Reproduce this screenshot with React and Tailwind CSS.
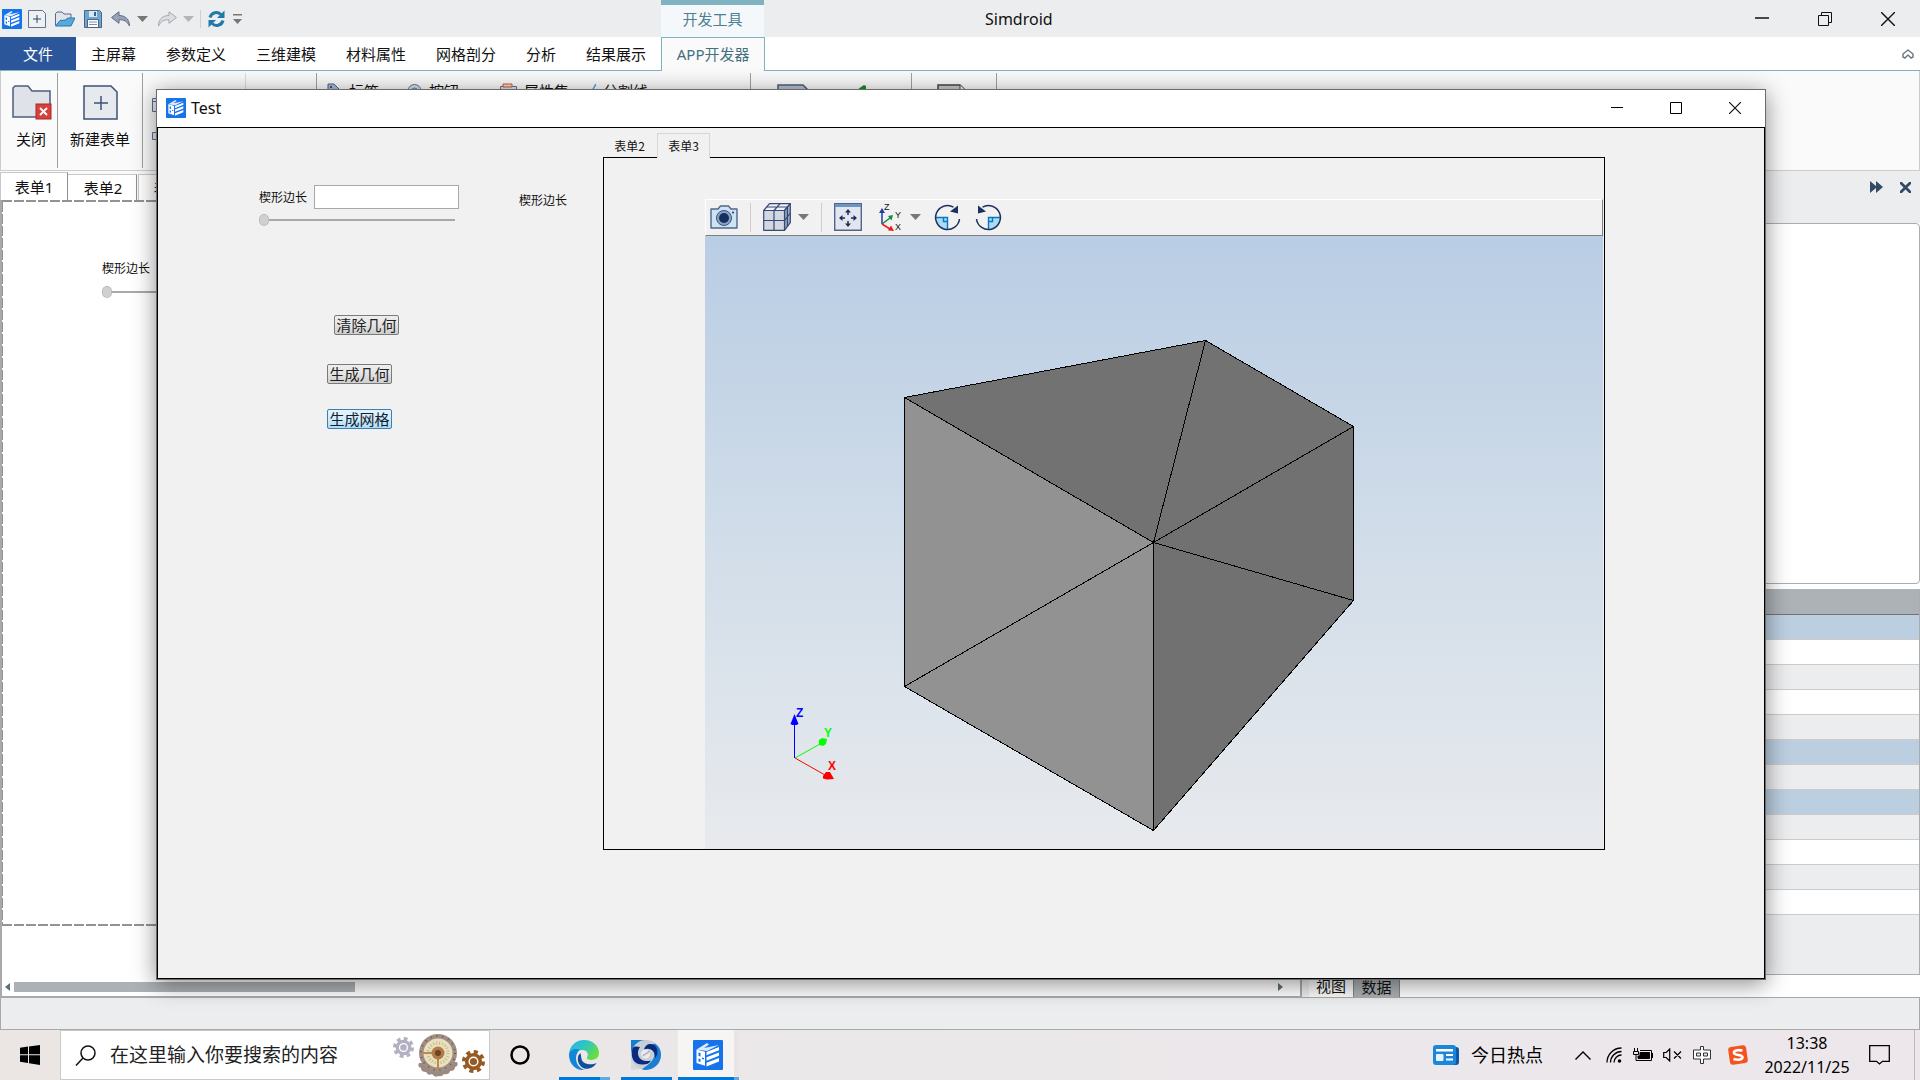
import React, { useState } from 'react';

const MENU_ITEMS = ['主屏幕', '参数定义', '三维建模', '材料属性', '网格剖分', '分析', '结果展示'];

const PROPERTY_ROWS = [
  'group', 'plain', 'alt', 'plain', 'alt', 'group',
  'alt', 'group', 'alt', 'plain', 'alt', 'plain',
];

const ROW_COLORS = {
  group: 'bg-[#bccfe0]',
  plain: 'bg-white',
  alt: 'bg-[#ecedef]',
};

function Caret({ className = 'text-[#777777]' }) {
  return (
    <svg width="11" height="6" viewBox="0 0 11 6" className={className}>
      <path d="M0 0h11L5.500 6z" fill="currentColor" />
    </svg>
  );
}

function AppLogo({ size = 20 }) {
  return (
    <svg width={size} height={size} viewBox="0 0 30 30">
      <rect width="30" height="30" rx="1" fill="#1673ec" />
      <path d="M3.500 9.500L14 3l2 1.500-5 3.500 15-3-12 6z" fill="#fff" opacity=".85" />
      <path d="M3.500 9.500l8.500 2.200v14L3.500 23z" fill="#fff" />
      <path d="M5.500 12.500l2 .5v3.500l-2-.5zM5.500 18.500l2 .5v3l-2-.5zM9 17.500l2 .5v1.500l-2-.5z" fill="#1673ec" />
      <path d="M13.500 12L26 7v3.200l-12.500 5zM13.500 17.200L26 12.500v3.200l-12.500 5zM13.500 22.700L26 18v3.500l-12.500 5z" fill="#fff" />
    </svg>
  );
}

function CloseIcon({ size = 12, width = 1.2 }) {
  return (
    <svg width={size} height={size} viewBox="0 0 12 12" fill="none" stroke="currentColor" strokeWidth={width}>
      <path d="M0 0l12 12M12 0L0 12" />
    </svg>
  );
}

function QuickAccess() {
  return (
    <div className="flex items-center h-full pl-[2px] w-[661px] shrink-0">
      <AppLogo />
      <button aria-label="New" className="ml-[6px]">
        <svg width="18" height="18" viewBox="0 0 18 18" fill="#eef0f4" stroke="#66738f">
          <path d="M.5.5h14l3 3v14H.5z" />
          <path d="M5 9h8M9 5v8" stroke="#2f4468" />
        </svg>
      </button>
      <button aria-label="Open" className="ml-[9px]">
        <svg width="20" height="16" viewBox="0 0 20 16">
          <path d="M.5 14.500V2.500L2 1h5l2 2h7v4" fill="#dfe3ea" stroke="#5c6a88" />
          <path d="M.5 15L5 9.500l6-.5 1.500-2H20l-4 8z" fill="#57a8dc" stroke="#2a79ac" />
        </svg>
      </button>
      <button aria-label="Save" className="ml-[9px]">
        <svg width="18" height="18" viewBox="0 0 18 18">
          <path d="M.5.5h15l2 2v15H.5z" fill="#6ea6d2" stroke="#4d6285" />
          <path d="M5 1h8v6H5z" fill="#dbe8f3" />
          <path d="M10 2h2v4h-2z" fill="#33628f" />
          <path d="M3.500 9.500h11v8h-11z" fill="#fff" stroke="#4d6285" />
          <path d="M5 12h8M5 14.500h8" stroke="#8290a4" />
        </svg>
      </button>
      <button aria-label="Undo" className="ml-[9px]">
        <svg width="20" height="16" viewBox="0 0 20 16">
          <path d="M.5 6.500L8 .8v3.700c6 0 10.500 3.500 10.500 10.500C16 10 13 8.700 8 8.700v3.600z" fill="#98a3b7" stroke="#5b6b86" />
        </svg>
      </button>
      <span className="ml-[6px]"><Caret /></span>
      <button aria-label="Redo" className="ml-[9px]">
        <svg width="20" height="16" viewBox="0 0 20 16">
          <path d="M19.500 6.500L12 .8v3.700C6 4.500 1.500 8 1.500 15 4 10 7 8.700 12 8.700v3.600z" fill="#dcdee1" stroke="#a3a7ad" />
        </svg>
      </button>
      <span className="ml-[6px]"><Caret className="text-[#b5b5b5]" /></span>
      <span className="ml-[6px] w-px h-[18px] bg-[#cfd0d2]" />
      <button aria-label="Refresh" className="ml-[7px]">
        <svg width="17" height="18" viewBox="0 0 17 18" fill="none" stroke="#1f7aa8" strokeWidth="3">
          <path d="M2 7.500C3.500 2 9.500 1.300 13 4.500" />
          <path d="M15 10.500C13.500 16 7.500 16.700 4 13.500" />
          <path d="M16.500.5V8H9z" fill="#1f7aa8" stroke="none" />
          <path d="M.5 17.500V10H8z" fill="#1f7aa8" stroke="none" />
        </svg>
      </button>
      <button aria-label="Customize" className="ml-[8px]">
        <svg width="9" height="10" viewBox="0 0 9 10" fill="#777">
          <path d="M0 0h9v1.500H0zM0 5h9L4.500 10z" />
        </svg>
      </button>
    </div>
  );
}

function TitleBar() {
  return (
    <header className="flex h-[37px] shrink-0 bg-[#ecedef]">
      <QuickAccess />
      <div className="w-[103px] shrink-0 border-t-[5px] border-[#80b3c2] bg-[#f4f8fb] pt-[4px] text-center text-[15px] leading-[20px] text-[#4c8091]">
        开发工具
      </div>
      <h1 className="flex-1 pl-[221px] self-center text-[16px] leading-[20px]">Simdroid</h1>
      <div className="flex items-center gap-[49px] pr-[25px] text-[#111]">
        <button aria-label="Minimize">
          <svg width="14" height="14" viewBox="0 0 14 14"><path d="M0 6h14" stroke="currentColor" strokeWidth="1.500" /></svg>
        </button>
        <button aria-label="Restore">
          <svg width="14" height="14" viewBox="0 0 14 14" fill="none" stroke="currentColor">
            <path d="M.5 3.500h10v10H.5zM3.500 3.500v-3h10v10h-3" />
          </svg>
        </button>
        <button aria-label="Close"><CloseIcon size={14} /></button>
      </div>
    </header>
  );
}

function MenuBar() {
  return (
    <nav className="flex h-[34px] shrink-0 bg-white border-b border-[#80b3c2] text-[15px]">
      <button className="w-[76px] pt-px bg-[#2b579a] text-white">文件</button>
      {MENU_ITEMS.map((item) => (
        <button key={item} className="px-[15px] pt-px whitespace-nowrap">{item}</button>
      ))}
      <button className="w-[104px] -mb-px border border-b-0 border-[#80b3c2] bg-[#fafafa] text-[#44707f] whitespace-nowrap">
        APP开发器
      </button>
      <div className="flex-1 flex items-center justify-end pr-[6px] text-[#6b7780]">
        <button aria-label="Collapse ribbon">
          <svg width="12" height="10" viewBox="0 0 12 10" fill="none" stroke="currentColor" strokeWidth="1.400" strokeLinejoin="round">
            <path d="M1 8V5L6 1l5 4v3L9 9 6 6 3 9z" />
          </svg>
        </button>
      </div>
    </nav>
  );
}

function RibbonItem({ label, children }) {
  return (
    <div className="flex items-center gap-[7px] text-[15px] leading-[20px] whitespace-nowrap">
      {children}
      {label}
    </div>
  );
}

function Ribbon() {
  return (
    <div className="flex h-[100px] shrink-0 bg-[#fafafa] border border-t-0 border-[#cdcdcd] py-[2px] text-[15px]">
      <button className="w-[57px] shrink-0 border-r border-[#a0a0a0] flex flex-col items-center pt-[12px] pl-[5px]">
        <svg width="40" height="35" viewBox="0 0 40 35">
          <path d="M1 32V3l2-2h13l4 5h18v26z" fill="#dfe2e9" stroke="#4c5d7d" strokeWidth="1.500" />
          <rect x="24" y="19" width="15" height="15" fill="#d9403c" stroke="#a52a28" />
          <path d="M28 23l7 7M35 23l-7 7" stroke="#fff" strokeWidth="1.800" />
        </svg>
        <span className="mt-[9px] mr-px leading-[20px]">关闭</span>
      </button>
      <button className="w-[85px] shrink-0 border-r border-[#a0a0a0] flex flex-col items-center pt-[12px]">
        <svg width="35" height="35" viewBox="0 0 35 35" fill="#e6e9ee" stroke="#3e5277" strokeWidth="1.500">
          <path d="M1 1h27l6 6v27H1z" />
          <path d="M11 18h14M18 11v14" />
        </svg>
        <span className="mt-[9px] leading-[20px] whitespace-nowrap">新建表单</span>
      </button>
      <div className="w-[103px] shrink-0 border-r border-[#dadada] pt-[25px] pl-[9px] flex flex-col gap-[19px]">
        <svg width="14" height="14" fill="#e6e9ee" stroke="#5c6f90"><path d="M.5.5h13v13H.5zM0 3.500h14" /></svg>
        <svg width="14" height="10" fill="#e6e9ee" stroke="#5c6f90"><path d="M.5 1.500h13v7H.5z" /></svg>
      </div>
      <div className="w-[71px] shrink-0 border-r border-[#a0a0a0]" />
      <div className="w-[434px] shrink-0 border-r border-[#a0a0a0] pl-[10px] pt-[8px] flex items-start">
        <div className="w-[80px]">
          <RibbonItem label="标签">
            <svg width="15" height="16" viewBox="0 0 15 16"><path d="M1 1h6l8 8-6 6-8-8z" fill="#a9bad2" stroke="#4b6286" /><circle cx="4" cy="4" r="1" fill="#1c2f52" /></svg>
          </RibbonItem>
        </div>
        <div className="w-[93px]">
          <RibbonItem label="按钮">
            <svg width="15" height="16" viewBox="0 0 15 16" fill="#d5dfec" stroke="#5c7396"><circle cx="7.500" cy="8" r="6.500" /><circle cx="7.500" cy="8" r="3" /></svg>
          </RibbonItem>
        </div>
        <div className="w-[88px]">
          <RibbonItem label="属性集">
            <svg width="17" height="16" viewBox="0 0 17 16"><path d="M.5 3.500h16v12H.5z" fill="#dfe4ec" stroke="#63738f" /><path d="M3 1h9v3H3z" fill="#f4d7ca" stroke="#c05a3a" /></svg>
          </RibbonItem>
        </div>
        <RibbonItem label="分割线">
          <svg width="8" height="16" viewBox="0 0 8 16" stroke="#4a9fe0" strokeWidth="1.500"><path d="M8 1L0 15" /></svg>
        </RibbonItem>
      </div>
      <div className="w-[161px] shrink-0 border-r border-[#a0a0a0] pl-[26px] pt-[11px] flex items-start gap-[42px]">
        <svg width="34" height="34" viewBox="0 0 34 34"><path d="M1 1h25l7 7v25H1z" fill="#b9c1cf" stroke="#4c5d7d" strokeWidth="1.500" /></svg>
        <svg width="20" height="34" viewBox="0 0 20 34"><path d="M0 9L8 3l3-2 2 1v3L8 20z" fill="#17901f" /></svg>
      </div>
      <div className="w-[85px] shrink-0 border-r border-[#a0a0a0] pl-[25px] pt-[11px]">
        <svg width="32" height="34" viewBox="0 0 32 34"><path d="M1 1h22l8 8v24H1z" fill="#c8c9cc" stroke="#444" strokeWidth="1.500" /><path d="M23 1v8h8" fill="#fff" stroke="#444" /></svg>
      </div>
    </div>
  );
}

function EdgeSlider({ id, label, className }) {
  const [value, setValue] = useState(0);
  return (
    <input
      id={id}
      type="range"
      aria-label={label}
      value={value}
      onChange={(e) => setValue(e.target.value)}
      className={`block w-[196px] h-[12px] appearance-none bg-transparent [&::-webkit-slider-runnable-track]:h-[2px] [&::-webkit-slider-runnable-track]:bg-[#a8a8a8] [&::-webkit-slider-thumb]:appearance-none [&::-webkit-slider-thumb]:w-[10px] [&::-webkit-slider-thumb]:h-[12px] [&::-webkit-slider-thumb]:-mt-[5px] [&::-webkit-slider-thumb]:rounded-full [&::-webkit-slider-thumb]:bg-[#d0d0d0] [&::-webkit-slider-thumb]:border [&::-webkit-slider-thumb]:border-dotted [&::-webkit-slider-thumb]:border-[#a8a8a8] ${className}`}
    />
  );
}

function DashedRule() {
  return <div className="h-[2px] shrink-0 bg-[repeating-linear-gradient(90deg,#939393_0px,#939393_10px,transparent_10px,transparent_12px)]" />;
}

/** Form designer: document tabs, canvas and its scroll bar. */
function Designer() {
  return (
    <section className="flex-1 min-w-0 flex flex-col bg-white">
      <div className="flex items-end h-[29px] shrink-0 bg-[#fafafa] text-[15px] leading-[20px]">
        <button className="w-[68px] h-[28px] bg-white border border-b-0 border-[#c8c8c8] border-r-[#8e8e8e]">表单1</button>
        <button className="w-[69px] h-[26px] pl-[2px] bg-white border border-l-0 border-b-0 border-[#c8c8c8] border-r-[#8e8e8e]">表单2</button>
        <button className="w-[70px] h-[26px] ml-px bg-white border border-b-0 border-[#c8c8c8] border-r-[#8e8e8e]">表单3</button>
      </div>
      <div className="flex-1 flex flex-col border-x-2 border-b-2 border-[#a9a9a9]">
        <div className="h-[726px] flex flex-col">
          <DashedRule />
          <div className="flex-1 flex">
            <div className="w-px bg-[repeating-linear-gradient(180deg,#939393_0px,#939393_10px,transparent_10px,transparent_12px)]" />
            <div className="pt-[58px] pl-[99px]">
              <label htmlFor="designer-edge" className="block text-[12px] leading-[18px]">楔形边长</label>
              <EdgeSlider id="designer-edge" className="mt-[8px]" />
            </div>
          </div>
          <DashedRule />
        </div>
        <div className="mt-auto mb-[4px] flex items-center h-[10px] pl-[3px] pr-[17px] text-[#5b7078]">
          <svg width="5" height="8" viewBox="0 0 5 8" fill="currentColor"><path d="M5 0v8L0 4z" /></svg>
          <div className="ml-[4px] w-[341px] h-[10px] bg-[#acb1b5]" />
          <svg width="5" height="8" viewBox="0 0 5 8" fill="currentColor" className="ml-auto"><path d="M0 0v8l5-4z" /></svg>
        </div>
      </div>
    </section>
  );
}

function PropertyDock() {
  return (
    <aside className="w-[618px] shrink-0 flex flex-col bg-white">
      <div className="h-[52px] shrink-0 bg-[#ecedef] flex justify-end gap-[17px] pt-[10px] pr-[9px] text-[#324a63]">
        <button aria-label="Next" className="h-[12px]">
          <svg width="13" height="12" viewBox="0 0 13 12" fill="currentColor"><path d="M0 0l6 5V0l7 6-7 6V7l-6 5z" /></svg>
        </button>
        <button aria-label="Close panel" className="h-[12px]"><CloseIcon size={11} width={3} /></button>
      </div>
      <div className="h-[361px] shrink-0 border border-[#a9adb0] rounded-sm" />
      <div className="mt-[5px] flex-1 flex flex-col border-r border-b border-[#a9adb0] bg-[#ecedef]">
        <div className="h-[26px] shrink-0 bg-[#adb2b6] border-b border-[#6f7478]" />
        {PROPERTY_ROWS.map((kind, i) => (
          <div key={i} className={`h-[25px] shrink-0 border-b border-[#cccccc] ${ROW_COLORS[kind]}`} />
        ))}
      </div>
      <div className="h-[23px] shrink-0 flex text-[15px] leading-[20px] border-b border-[#a9a9a9]">
        <div className="w-[7px] bg-[#ecedef]" />
        <button className="w-[44px] bg-[#fafafa]">视图</button>
        <button className="w-[47px] bg-[#a9afb3] border-x border-[#808488] pt-[2px]">数据</button>
      </div>
    </aside>
  );
}

function FormButton({ children, active, className }) {
  const look = active
    ? 'border-[#3c7fb1] from-[#e3f3fc] via-[#d2ecfa] to-[#acdcf7] text-[#102030]'
    : 'border-[#7a7a7a] from-[#eeeeee] via-[#e4e4e4] to-[#cecece] text-[#222]';
  return (
    <button className={`block w-[65px] h-[20px] border rounded-[2px] bg-linear-to-b text-[15px] leading-[17px] whitespace-nowrap ${look} ${className}`}>
      {children}
    </button>
  );
}

function ParameterForm() {
  const [edge, setEdge] = useState('');
  return (
    <div className="w-[445px] shrink-0 pl-[101px] pt-[56px]">
      <div className="flex items-center text-[12px] leading-[18px]">
        <label htmlFor="edge" className="pt-[2px]">楔形边长</label>
        <input
          id="edge"
          type="text"
          value={edge}
          onChange={(e) => setEdge(e.target.value)}
          className="ml-[7px] w-[145px] h-[24px] bg-white border border-[#a8a8a8] px-1 outline-none"
        />
        <span className="ml-[60px] pt-[8px]">楔形边长</span>
      </div>
      <EdgeSlider label="楔形边长" className="mt-[4px]" />
      <FormButton className="mt-[89px] ml-[75px]">清除几何</FormButton>
      <FormButton className="mt-[29px] ml-[68px]">生成几何</FormButton>
      <FormButton active className="mt-[25px] ml-[68px]">生成网格</FormButton>
    </div>
  );
}

function ViewToolbar() {
  return (
    <div className="h-[37px] shrink-0 flex items-center pl-[4px] pb-px border border-t-white border-l-white border-r-[#808080] border-b-[#808080]">
      <button aria-label="Snapshot">
        <svg width="28" height="24" viewBox="0 0 28 24">
          <path d="M1 4h7l2.500-3h8L21 4h6v19H1z" fill="#cfe2f3" stroke="#50658c" strokeWidth="1.400" strokeLinejoin="round" />
          <circle cx="14" cy="13" r="7.500" fill="#8aa3c4" stroke="#3c5580" />
          <circle cx="14" cy="13" r="5" fill="#172f5e" />
          <circle cx="23" cy="7.500" r="1" fill="#172f5e" />
        </svg>
      </button>
      <span className="ml-[12px] w-px h-[29px] bg-[#cdcdcd]" />
      <button aria-label="Mesh display" className="ml-[12px] flex items-center gap-[7px]">
        <svg width="28" height="28" viewBox="0 0 28 28" stroke="#344a76" strokeWidth="1.200" strokeLinejoin="round">
          <path d="M.7 7.500L6.500.7h20.800L21.500 7.500z" fill="#f0f1f5" />
          <path d="M21.500 7.500L27.300.7v19l-5.800 7.600z" fill="#9da8bf" />
          <path d="M.7 7.500h20.800v19.800H.7z" fill="#d3d7e1" />
          <path d="M11 27V7.500L17 .7M.7 17.500h20.800l5.800-7.300M3.500 4h20.900v19.500" fill="none" />
        </svg>
        <Caret />
      </button>
      <span className="ml-[12px] w-px h-[29px] bg-[#cdcdcd]" />
      <button aria-label="Fit view" className="ml-[12px]">
        <svg width="28" height="28" viewBox="0 0 28 28">
          <path d="M.7.700h26.600v26.600H.7z" fill="#e3e6ed" stroke="#506691" strokeWidth="1.400" />
          <path d="M1 1h26v3H1z" fill="#6c93c4" />
          <g fill="none" stroke="#172f5e" strokeWidth="1.500">
            <path d="M14 12V8M14 18v4M11 15H7M17 15h4" />
          </g>
          <path d="M14 6l3 3.500h-6zM14 24l3-3.500h-6zM5 15l3.500-3v6zM23 15l-3.500-3v6z" fill="#172f5e" />
        </svg>
      </button>
      <button aria-label="View direction" className="ml-[17px] flex items-center gap-[8px]">
        <svg width="23" height="28" viewBox="0 0 23 28">
          <path d="M3 21V8" stroke="#1d3fa8" strokeWidth="1.500" />
          <path d="M3 5l3 5H0z" fill="#1d3fa8" />
          <path d="M3 21l8-6" stroke="#178a3d" strokeWidth="1.500" />
          <path d="M14 12l-1.500 5.500-3.500-4.500z" fill="#178a3d" />
          <path d="M3 21l8 5" stroke="#e8211d" strokeWidth="1.500" />
          <path d="M15 28l-6-.5 3-5z" fill="#e8211d" />
          <g fontSize="9" fontFamily="Liberation Sans, sans-serif" fill="#111">
            <text x="5" y="7">Z</text>
            <text x="16" y="15">Y</text>
            <text x="16" y="27">X</text>
          </g>
        </svg>
        <Caret />
      </button>
      <button aria-label="Rotate clockwise" className="ml-[13px]">
        <svg width="27" height="27" viewBox="0 0 27 27">
          <path d="M1.500 13.500H13.500V25.500C7 25.500 1.500 20 1.500 13.500z" fill="#a9dbf4" />
          <path d="M1.500 13.500H13.500V25.500M9.500 13.500v4h4" fill="none" stroke="#0879be" strokeWidth="1.400" />
          <path d="M19.500 3.100A12 12 0 1 0 25.500 15" fill="none" stroke="#1b315f" strokeWidth="1.500" />
          <path d="M24 1.500v8l-8-2z" fill="#1b315f" />
        </svg>
      </button>
      <button aria-label="Rotate counterclockwise" className="ml-[14px]">
        <svg width="27" height="27" viewBox="0 0 27 27">
          <path d="M25.500 13.500H13.500V25.500C20 25.500 25.500 20 25.500 13.500z" fill="#a9dbf4" />
          <path d="M25.500 13.500H13.500V25.500M17.500 13.500v4h-4" fill="none" stroke="#0879be" strokeWidth="1.400" />
          <path d="M7.500 3.100A12 12 0 1 1 1.500 15" fill="none" stroke="#1b315f" strokeWidth="1.500" />
          <path d="M3 1.500v8l8-2z" fill="#1b315f" />
        </svg>
      </button>
    </div>
  );
}

function MeshView() {
  return (
    <div className="flex-1 min-h-0 bg-linear-to-b from-[#b9cde4] via-[#d1dde9] to-[#e8eaed]">
      <svg viewBox="0 0 898 613" className="block w-full h-full">
        <g stroke="#000" strokeWidth="1" strokeLinejoin="round" shapeRendering="crispEdges">
          <path d="M199.500 161.500L500.500 104.500 648.500 190.500 448.500 306.500z" fill="#727272" />
          <path d="M199.500 161.500L448.500 306.500V594.500L199.500 450.500z" fill="#929292" />
          <path d="M448.500 306.500L648.500 190.500V364.500L448.500 594.500z" fill="#717171" />
          <path d="M500.500 104.500L448.500 306.500 648.500 364.500M448.500 306.500L199.500 450.500" fill="none" />
        </g>
        {/* Axis triad */}
        <path d="M89.500 522V486" stroke="#00f" />
        <path d="M89.500 478l4 10-2 1h-4l-2-1z" fill="#00f" />
        <path d="M90 522l25-14" stroke="#0f0" />
        <path d="M114 504l3-2 5 1-1 5-3 2-4-1z" fill="#0f0" />
        <path d="M90 522l30 17" stroke="#f00" />
        <path d="M118 540l3-4h4l4 7-7 .5-4-1z" fill="#f00" />
        <g fontSize="12" fontWeight="bold" fontFamily="Liberation Sans, sans-serif">
          <text x="91" y="481" fill="#00f">Z</text>
          <text x="119" y="501" fill="#0f0">Y</text>
          <text x="123" y="534" fill="#f00">X</text>
        </g>
      </svg>
    </div>
  );
}

function TestWindow() {
  return (
    <div className="absolute left-[156px] right-[154px] top-[89px] bottom-[100px] flex flex-col border border-[#6b6b6b] bg-[#f1f1f1] shadow-[0_4px_22px_rgba(0,0,0,0.45)]">
      <div className="h-[37px] shrink-0 flex items-center bg-white pl-[9px] pr-[24px] pb-px">
        <AppLogo />
        <h2 className="ml-[5px] flex-1 text-[16px] leading-[20px]">Test</h2>
        <div className="flex items-center gap-[47px]">
          <button aria-label="Minimize window">
            <svg width="12" height="12" viewBox="0 0 12 12"><path d="M0 5.500h12" stroke="#000" /></svg>
          </button>
          <button aria-label="Maximize window">
            <svg width="12" height="12" viewBox="0 0 12 12" fill="none" stroke="#000"><path d="M.5.5h11v11H.5z" /></svg>
          </button>
          <button aria-label="Close window"><CloseIcon /></button>
        </div>
      </div>
      <div className="flex-1 min-h-0 flex border border-black">
        <ParameterForm />
        <div className="flex-1 min-w-0 flex flex-col pt-[5px] mr-[159px] mb-[128px]">
          <div className="flex h-[25px] shrink-0 -mb-px relative z-10 text-[12px] leading-[18px] font-[family-name:'Noto_Sans_CJK_SC',sans-serif]">
            <button className="w-[54px] pl-[2px] pr-[12px] text-right">表单2</button>
            <button className="w-[53px] bg-[#f1f1f1] border border-b-0 border-[#d6d6d6]">表单3</button>
          </div>
          <div className="flex-1 min-h-0 flex flex-col border border-black pl-[101px] pt-[41px] pr-px">
            <ViewToolbar />
            <MeshView />
          </div>
        </div>
      </div>
    </div>
  );
}

function Gear({ size, color, hole }) {
  return (
    <svg width={size} height={size} viewBox="0 0 24 24" fill="none" stroke={color}>
      <circle cx="12" cy="12" r="10" strokeWidth="4" strokeDasharray="4.200 3.650" />
      <circle cx="12" cy="12" r="6.500" strokeWidth="5" />
      <circle cx="12" cy="12" r="4.500" fill={color} stroke={hole} strokeWidth="1.500" />
    </svg>
  );
}

function SearchBox() {
  return (
    <div className="w-[430px] shrink-0 flex items-center bg-white border border-[#c9c9c9] pl-[14px] pr-[4px]">
      <svg width="21" height="21" viewBox="0 0 21 21" fill="none" stroke="#111" strokeWidth="1.500">
        <circle cx="13" cy="8" r="7" />
        <path d="M8 13l-7 7.500" />
      </svg>
      <input
        type="text"
        aria-label="Search"
        placeholder="在这里输入你要搜索的内容"
        className="ml-[14px] w-[250px] text-[19px] leading-[24px] outline-none placeholder:text-[#222] placeholder:opacity-100"
      />
      <div className="ml-auto flex items-center">
        <span className="mb-[16px]"><Gear size={21} color="#b3b0c3" hole="#fff" /></span>
        <svg width="42" height="44" viewBox="0 0 42 44" className="mx-[3px]">
          <path d="M2 30q-2 4 2 5 0 4 5 4 2 4 6 2 3 4 6 2 4 1 6-2 5 1 6-3 5 0 5-4 4-1 2-5z" fill="#9b8a80" />
          <circle cx="21" cy="20" r="19" fill="#a08e84" />
          <circle cx="21" cy="20" r="17" fill="none" stroke="#6d5c54" strokeWidth="2" strokeDasharray="1 5" />
          <circle cx="21" cy="20" r="14.500" fill="#e9e0bd" />
          <circle cx="21" cy="20" r="10" fill="none" stroke="#c3b78e" strokeWidth="3" strokeDasharray="1 2" />
          <path d="M4 20h17v17" fill="none" stroke="#b98a55" strokeWidth="2" />
          <circle cx="21" cy="20" r="6.500" fill="#b17b48" />
          <circle cx="21" cy="20" r="3" fill="#6b4426" />
        </svg>
        <span className="mt-[13px]"><Gear size={23} color="#965a22" hole="#fff" /></span>
      </div>
    </div>
  );
}

function Tray() {
  return (
    <div className="ml-auto flex items-center text-black">
      <svg width="26" height="20" viewBox="0 0 26 20">
        <rect x="3" y="2" width="23" height="18" rx="3" fill="#0c59a8" />
        <rect width="23" height="20" rx="3" fill="#1a86dc" />
        <path d="M3 4h17v2.500H3zM13 9h7v2h-7zM13 13.500h7v2h-7z" fill="#fff" />
        <rect x="3" y="9" width="7.500" height="7" rx="1" fill="#e8f4fd" />
      </svg>
      <span className="ml-[12px] text-[18px] leading-[24px] whitespace-nowrap">今日热点</span>
      <svg width="16" height="9" viewBox="0 0 16 9" fill="none" stroke="currentColor" strokeWidth="1.400" className="ml-[32px]"><path d="M.5 8.500L8 1l7.500 7.500" /></svg>
      <svg width="16" height="16" viewBox="0 0 16 16" fill="none" stroke="currentColor" strokeWidth="1.300" className="ml-[15px]">
        <path d="M1 15.500C1 7.500 7.500 1 15.500 1M4.500 15.500c0-6 5-11 11-11M8 15.500C8 11.500 11.500 8 15.500 8" />
        <circle cx="13.500" cy="14" r="1.800" fill="currentColor" stroke="none" />
      </svg>
      <svg width="20" height="14" viewBox="0 0 20 14" fill="none" stroke="currentColor" className="ml-[11px]">
        <path d="M1.500 0v3M4.500 0v3M.5 3.500h5v3h-5zM3 6.500v6h15.500v-10H7" />
        <path d="M7 4.500h9.500v6H5V8h2z" fill="currentColor" />
        <path d="M19.500 5v5" />
      </svg>
      <svg width="19" height="14" viewBox="0 0 19 14" fill="none" stroke="currentColor" strokeWidth="1.200" className="ml-[10px]">
        <path d="M.7 4.500h2.500l3.500-3.500v12L3.200 9.500H.7zM11 3.500l7 7M18 3.500l-7 7" />
      </svg>
      <svg width="18" height="18" viewBox="0 0 18 18" className="ml-[11px]" fill="#fff" stroke="#333">
        <path d="M7.500.5h3V4h7v9h-7v4.500h-3V13H.5V4h7zM3.500 7v3h4V7zM10.500 7v3h4V7z" fillRule="evenodd" />
      </svg>
      <svg width="20" height="20" viewBox="0 0 20 20" className="ml-[17px]">
        <rect x="1" y="1" width="18" height="18" rx="3" fill="#f4531f" transform="rotate(-8 10 10)" />
        <path d="M14.500 5.500C9 4.500 5.500 5.500 6 8s8.500 1.500 8.500 4-4 3.500-9 2" fill="none" stroke="#fff" strokeWidth="2.600" />
      </svg>
      <div className="ml-[15px] w-[88px] text-center text-[16px] leading-[24px]">
        <div>13:38</div>
        <div>2022/11/25</div>
      </div>
      <svg width="21" height="20" viewBox="0 0 21 20" fill="none" stroke="currentColor" strokeWidth="1.300" className="ml-[18px]">
        <path d="M.7.700h19.600v15.600h-6.800L10.500 19l-3-2.700H.7z" />
      </svg>
      <span className="ml-[24px] mr-[5px] w-px h-[50px] bg-[#bdb8bb]" />
    </div>
  );
}

function Taskbar() {
  return (
    <footer className="h-[50px] shrink-0 flex bg-linear-to-r from-[#ebe6e4] via-[#ebe8ea] to-[#ede7eb]">
      <button aria-label="Start" className="w-[60px] shrink-0 flex items-center justify-center">
        <svg width="20" height="20" viewBox="0 0 20 20"><path d="M0 2.800L8 1.600v7.700H0zM9 1.400L20 0v9.300H9zM0 10.300h8V18l-8-1.200zM9 10.300h11V20L9 18.300z" /></svg>
      </button>
      <SearchBox />
      <button aria-label="Cortana" className="w-[60px] shrink-0 flex items-center justify-center">
        <svg width="20" height="20" viewBox="0 0 20 20" fill="none" stroke="#000" strokeWidth="2.500"><circle cx="10" cy="10" r="8.500" /></svg>
      </button>
      <button aria-label="Edge" className="ml-[9px] w-[51px] pt-[3px] flex flex-col justify-between">
        <svg width="30" height="30" viewBox="0 0 30 30" className="mt-[7px] ml-[10px]">
          <defs>
            <linearGradient id="edge-top" x1="0" y1="0" x2="1" y2=".6">
              <stop offset="0" stopColor="#2bb4e8" />
              <stop offset=".5" stopColor="#2cc5c5" />
              <stop offset="1" stopColor="#6ade3f" />
            </linearGradient>
          </defs>
          <path d="M0 15C0 6 7 0 15 0c9 0 15 6 15 13 0 5-4 7-8 7-3 0-4.500-1-4-2.500 2-3 .5-7.500-5-7.500C6 10 0 15 0 15z" fill="url(#edge-top)" />
          <path d="M0 15C1 9 7 8 11 10c-2 1-4 4-4 8 0 6 4 11 9 12C7 31 0 24 0 15z" fill="#1185d6" />
          <path d="M11.500 13c-4 3-3.500 10 1 14 4 3.500 12 1.500 15-4-5 2.500-14 1.500-15-4-.5-2.500-.5-4-1-6z" fill="#0f4f9e" />
        </svg>
        <span className="w-full h-[3px] bg-linear-to-r from-[#0078d7] from-80% to-[#62a9e4] to-80%" />
      </button>
      <button aria-label="Simulator" className="ml-[11px] w-[51px] pt-[3px] flex flex-col justify-between">
        <svg width="30" height="30" viewBox="0 0 30 30" className="mt-[7px] ml-[10px]">
          <path d="M0 0h16L6 4 0 14z" fill="#0f7fd2" />
          <path d="M0 30V18l10 11z" fill="#d5d8dc" />
          <circle cx="15" cy="15" r="15" fill="#c9ced4" />
          <path d="M1.500 8C-1 18 3 25 12 24.500c4 0 6-1 8-4-6 1.500-11 0-12.500-4.500C6.500 13 7 10 9 7c-4-1-6.500-.5-7.500 1z" fill="#0a2a80" />
          <path d="M20 9c5 3 4 10-1 14-3 3-7 5-8 6.500C20 32 30 25 30 15c0-5-2-9-6-11.500C21 4 20 6 20 9z" fill="#1a7fd4" />
          <path d="M13 9.500C19 7 25 11 24 18c5-5 2-14-4-14-4 0-6 2-7 5.500z" fill="#0a2a80" />
          <circle cx="14.500" cy="14" r="4.500" fill="#e9ebee" />
          <path d="M12 16c2-3 5-2 6-5" fill="none" stroke="#a9b0b8" strokeWidth="1.500" />
        </svg>
        <span className="w-full h-[3px] bg-[#0078d7]" />
      </button>
      <button aria-label="Simdroid" className="ml-[6px] w-[61px] flex flex-col justify-between bg-linear-to-r from-[#f7f5f4] from-92% to-[#e9e5e6] to-92%">
        <span className="mt-[10px] ml-[15px]"><AppLogo size={30} /></span>
        <span className="w-full h-[3px] bg-linear-to-r from-[#0078d7] from-92% to-[#62a9e4] to-92%" />
      </button>
      <Tray />
    </footer>
  );
}

export default function App() {
  return (
    <div className="relative h-screen flex flex-col overflow-hidden bg-white text-[#111] font-[family-name:'Noto_Sans','Noto_Sans_CJK_SC',sans-serif]">
      <TitleBar />
      <MenuBar />
      <Ribbon />
      <main className="flex-1 min-h-0 flex">
        <Designer />
        <PropertyDock />
      </main>
      <div className="h-[32px] shrink-0 bg-[#ecedef] border border-t-0 border-[#a9a9a9]" />
      <Taskbar />
      <TestWindow />
    </div>
  );
}
